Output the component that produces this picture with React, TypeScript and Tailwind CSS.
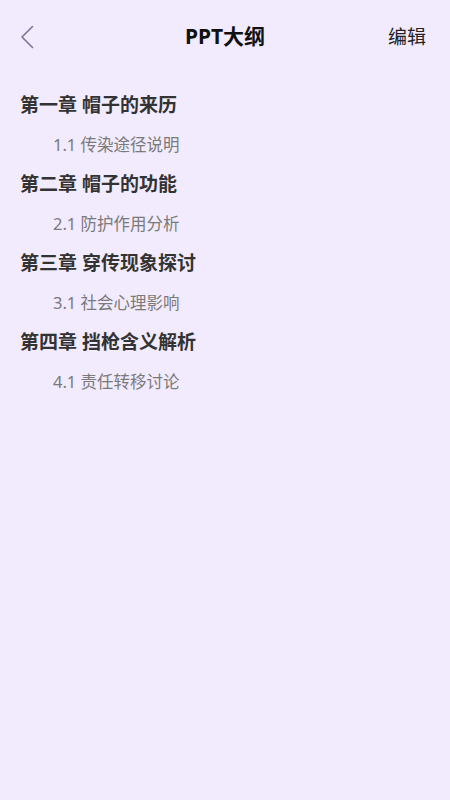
const outline = [
  { title: "第一章 帽子的来历", sub: "1.1 传染途径说明" },
  { title: "第二章 帽子的功能", sub: "2.1 防护作用分析" },
  { title: "第三章 穿传现象探讨", sub: "3.1 社会心理影响" },
  { title: "第四章 挡枪含义解析", sub: "4.1 责任转移讨论" },
];

export default function App() {
  return (
    <div
      className="min-h-screen w-full bg-[#f1ebfd]"
      style={{ fontFamily: '"Noto Sans", "Noto Sans CJK SC", sans-serif' }}
    >
      {/* header */}
      <div className="relative flex h-[74px] items-center justify-between pl-5 pr-6">
        <button className="flex h-8 w-8 items-center">
          <svg width="14" height="24" viewBox="0 0 14 24" fill="none">
            <path d="M12.5 1.5 L2 12 L12.5 22.5" stroke="#7c7499" strokeWidth="1.6" strokeLinecap="round" strokeLinejoin="round" />
          </svg>
        </button>
        <div className="absolute left-1/2 -translate-x-1/2 text-[21px] font-bold text-[#111]">PPT大纲</div>
        <button className="text-[19px] text-[#222]">编辑</button>
      </div>

      {/* outline list */}
      <div className="flex flex-col px-5 pt-[12px]">
        {outline.map((c) => (
          <div key={c.title} className="flex flex-col">
            <div className="flex h-[39px] items-center text-[19px] font-bold text-[#333]">{c.title}</div>
            <div className="flex h-[40px] items-center pl-[33px] text-[16.5px] text-[#7a7a7a]">{c.sub}</div>
          </div>
        ))}
      </div>
    </div>
  );
}
